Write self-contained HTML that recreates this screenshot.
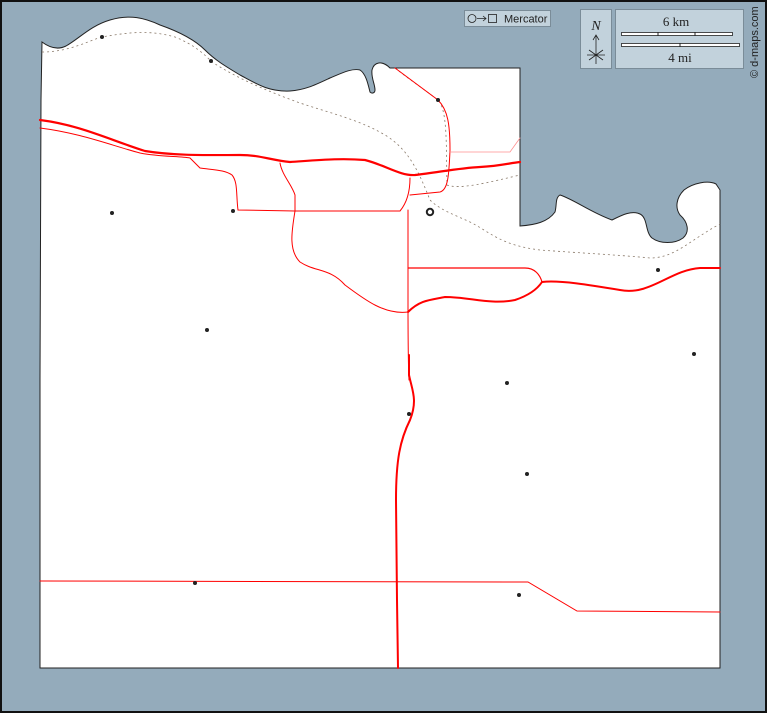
<!DOCTYPE html>
<html><head><meta charset="utf-8"><style>
html,body{margin:0;padding:0;background:#94abbb;}
svg{display:block}
text{font-family:"Liberation Serif",serif}
</style></head><body>
<svg width="767" height="713" viewBox="0 0 767 713" xmlns="http://www.w3.org/2000/svg">
<rect x="0" y="0" width="767" height="713" fill="#94abbb"/>
<rect x="1" y="1" width="765" height="711" fill="none" stroke="#111" stroke-width="2"/>
<!-- land -->
<path d="M42,42 C50,48 58,50 66,46 C80,38 90,26 110,20 C130,14 145,18 160,25 C180,32 195,40 205,50 C215,60 225,66 240,75 C255,83 268,92 290,91 C305,90 315,85 330,78 C342,73 352,68 360,70 C366,74 368,84 370,92 C372,94 375,93 375,90 C375,84 371,78 372,70 C374,62 382,60 390,68 L520,68 L520,226 C535,225 548,222 555,212 C557,205 555,198 560,195 C575,200 590,212 612,220 C622,215 632,210 640,214 C648,218 645,232 652,238 C660,244 675,244 683,238 C690,232 688,222 680,215 C675,208 676,198 684,190 C693,183 708,180 716,184 L720,190 L720,668 L40,668 L40,380 L41,100 Z" fill="#fff" stroke="#222" stroke-width="1"/>
<!-- dotted boundary -->
<g fill="none" stroke="#8a7a6a" stroke-width="0.8" stroke-dasharray="2,3">
<path d="M42,52 C70,52 90,40 102,37 C130,32 150,30 175,37 C195,45 205,55 212,62 C240,80 270,92 300,103 C330,113 360,120 385,135 C410,150 420,175 430,200 C440,210 455,215 470,222 C490,232 500,245 540,250 C580,253 620,255 650,258 C675,258 690,240 720,224"/>
<path d="M395,68 C410,80 425,90 438,100 C448,110 446,150 447,185 C460,190 490,182 520,175"/>
</g>
<!-- roads -->
<g fill="none" stroke="#ff0000" stroke-linecap="round">
<path stroke-width="2.2" d="M40,120 C80,125 110,140 145,151 C175,156 210,155 240,155 C260,155 270,160 290,162 C320,160 340,158 365,160 C385,165 400,176 415,175 C440,172 460,168 480,167 C500,166 510,163 520,162"/>
<path stroke-width="1" d="M40,128 C80,133 110,145 140,153 C160,157 180,156 190,158 L200,168 C215,170 225,170 232,175 C238,182 236,195 238,210 L295,211 L400,211 C405,205 410,195 410,178"/>
<path stroke-width="1" d="M280,163 C282,175 292,185 295,195 L295,211 C292,230 288,250 300,262 C315,272 330,268 345,285 C365,300 385,315 408,312"/>
<path stroke-width="1" d="M408,210 L408,300 C408,340 408,360 409,380"/>
<path stroke-width="2" d="M408,312 C420,300 430,300 445,297 C470,297 490,305 515,300 C530,295 538,288 542,282 C560,280 590,285 620,290 C650,296 670,270 700,268 L720,268"/>
<path stroke-width="1.2" d="M408,268 L525,268 C535,268 540,275 542,282"/>
<path stroke-width="2" d="M409,355 L409,375 C412,390 418,400 410,420 C400,440 396,460 396,500 L397,600 L398,668"/>
<path stroke-width="1" d="M40,581 L528,582 L577,611 L720,612"/>
<path stroke-width="1" d="M395,68 L438,100 C448,110 450,125 450,150 C449,175 448,190 440,192 L410,195"/>
<path stroke-width="0.8" stroke="#ff9090" d="M450,152 L510,152 L520,138"/>
</g>
<!-- dots -->
<g fill="#222">
<circle cx="102" cy="37" r="2"/><circle cx="211" cy="61" r="2"/><circle cx="438" cy="100" r="2"/>
<circle cx="112" cy="213" r="2"/><circle cx="233" cy="211" r="2"/><circle cx="207" cy="330" r="2"/>
<circle cx="658" cy="270" r="2"/><circle cx="694" cy="354" r="2"/><circle cx="507" cy="383" r="2"/>
<circle cx="409" cy="414" r="2"/><circle cx="527" cy="474" r="2"/><circle cx="195" cy="583" r="2"/>
<circle cx="519" cy="595" r="2"/>
</g>
<circle cx="430" cy="212" r="3.2" fill="none" stroke="#222" stroke-width="2"/>
<!-- Mercator -->
<rect x="464.5" y="10.5" width="86" height="16" fill="#c2d2dc" stroke="#7a8c98"/>
<circle cx="472" cy="18.5" r="4" fill="none" stroke="#222" stroke-width="0.8"/>
<path d="M477,18.5 H486 M483,16 L486,18.5 L483,21" stroke="#222" stroke-width="0.8" fill="none"/>
<rect x="488.5" y="14.5" width="8" height="8" fill="none" stroke="#222" stroke-width="0.8"/>
<text x="504" y="22.5" font-size="11" fill="#222" style="font-family:'Liberation Sans',sans-serif">Mercator</text>
<!-- north -->
<rect x="580.5" y="9.5" width="31" height="59" fill="#c2d2dc" stroke="#7a8c98"/>
<text x="596" y="30" font-size="14" font-style="italic" text-anchor="middle" fill="#222">N</text>
<path d="M596,36 L596,64 M593,40 L596,35 L599,40 M589,50 L603,60 M603,50 L589,60 M587,55 L605,55" stroke="#222" stroke-width="0.8" fill="none"/>
<!-- scale -->
<rect x="615.5" y="9.5" width="128" height="59" fill="#c2d2dc" stroke="#7a8c98"/>
<text x="676" y="26" font-size="13" text-anchor="middle" fill="#222">6 km</text>
<rect x="621.5" y="32.5" width="111" height="3" fill="#fff" stroke="#222" stroke-width="0.8"/>
<path d="M658,32 V36 M695,32 V36" stroke="#222"/>
<rect x="621.5" y="43.5" width="118" height="3" fill="#fff" stroke="#222" stroke-width="0.8"/>
<path d="M680,43 V47" stroke="#222"/>
<text x="680" y="62" font-size="13" text-anchor="middle" fill="#222">4 mi</text>
<text transform="translate(758,78) rotate(-90)" font-size="11" fill="#222" style="font-family:'Liberation Sans',sans-serif">© d-maps.com</text>
</svg>
</body></html>
